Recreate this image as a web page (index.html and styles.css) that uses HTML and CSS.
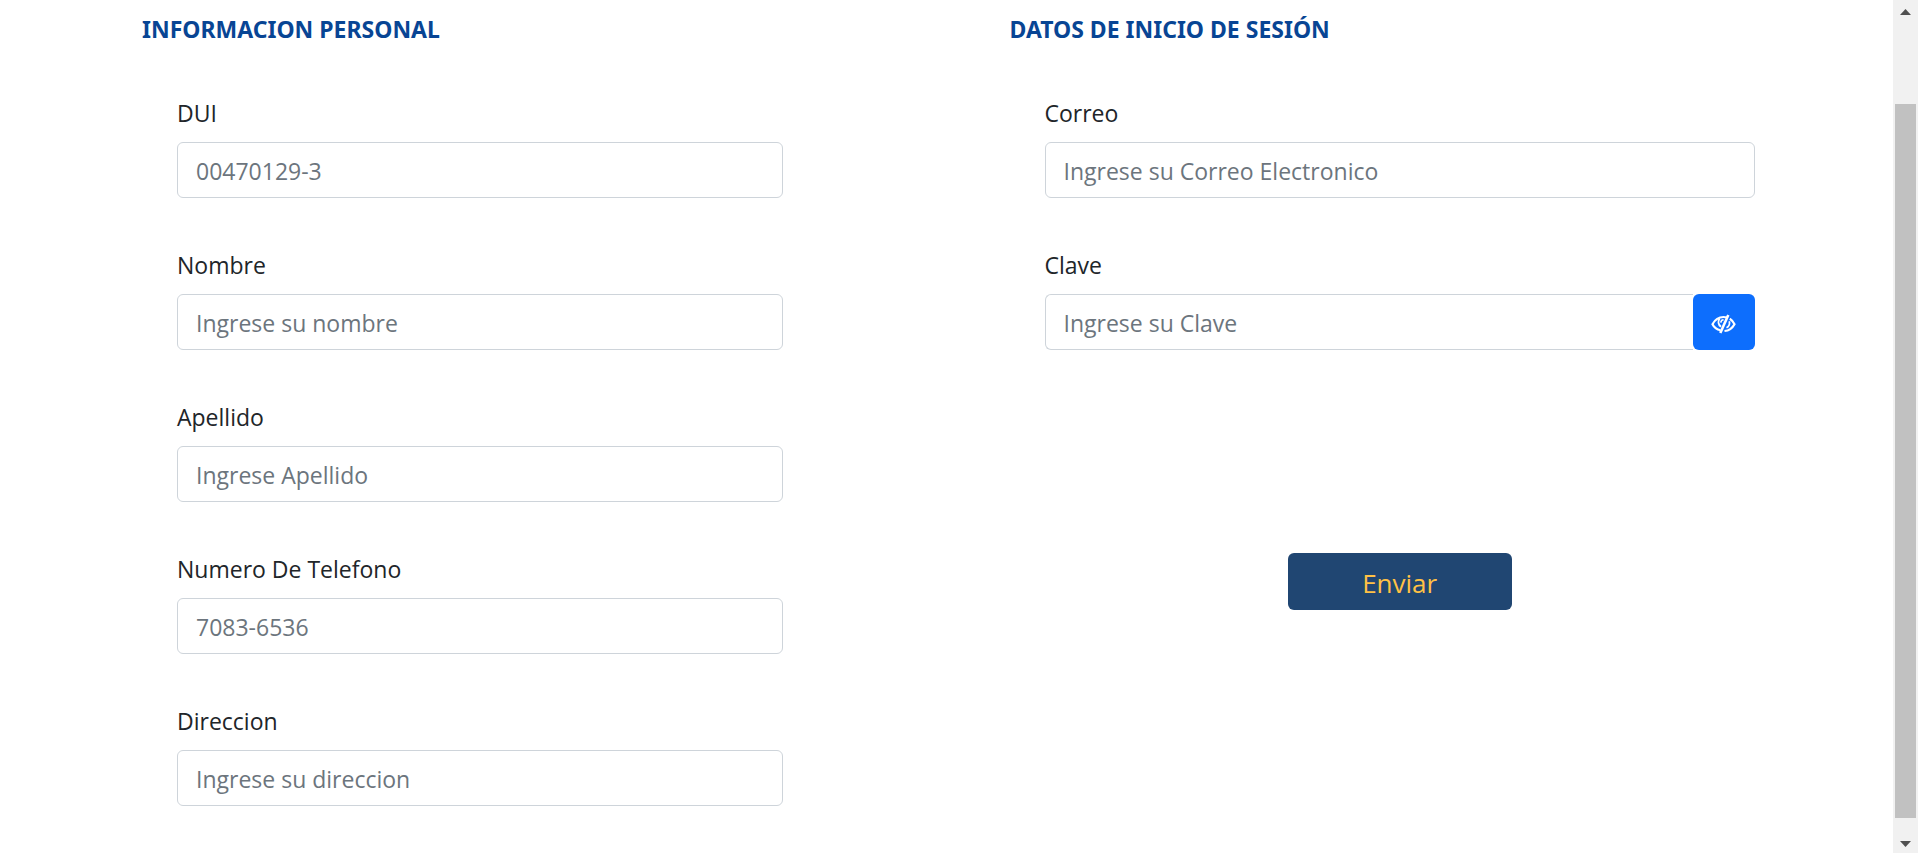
FILE: index.html
```html
<!DOCTYPE html>
<html lang="es">
<head>
<meta charset="utf-8">
<meta name="viewport" content="width=device-width, initial-scale=1">
<title>Registro</title>
<link rel="stylesheet" href="styles.css">
</head>
<body class="page">
<form class="form">
  <section class="column">
    <h2 class="heading">INFORMACION PERSONAL</h2>
    <div class="fields fields-personal">
      <div class="field"><label class="label" for="dui">DUI</label><input class="input" id="dui" type="text" placeholder="00470129-3"></div>
      <div class="field"><label class="label" for="nombre">Nombre</label><input class="input" id="nombre" type="text" placeholder="Ingrese su nombre"></div>
      <div class="field"><label class="label" for="apellido">Apellido</label><input class="input" id="apellido" type="text" placeholder="Ingrese Apellido"></div>
      <div class="field"><label class="label" for="telefono">Numero De Telefono</label><input class="input" id="telefono" type="tel" placeholder="7083-6536"></div>
      <div class="field"><label class="label" for="direccion">Direccion</label><input class="input" id="direccion" type="text" placeholder="Ingrese su direccion"></div>
    </div>
  </section>
  <section class="column">
    <h2 class="heading">DATOS DE INICIO DE SESIÓN</h2>
    <div class="fields fields-login">
      <div class="field"><label class="label" for="correo">Correo</label><input class="input" id="correo" type="email" placeholder="Ingrese su Correo Electronico"></div>
      <div class="field">
        <label class="label" for="clave">Clave</label>
        <div class="group">
          <input class="input input-joined" id="clave" type="password" placeholder="Ingrese su Clave">
          <button class="toggle" type="button" aria-label="Mostrar clave">
            <svg class="eye" viewBox="0 0 25 20" fill="none" stroke="currentColor" aria-hidden="true">
              <path d="M9.500 16.200C5.500 15.300 2.800 12.800 1.500 10.200C4 5.500 8 3 12.500 3C13.700 3 14.800 3.200 15.800 3.500" stroke-width="2.200"/>
              <path d="M18.800 4.700C20.800 5.900 22.300 7.800 23.500 10.200C21.500 13.900 18 16.600 13.500 17" stroke-width="2.200"/>
              <path d="M8.500 4.500C6.800 7 7.200 10.600 10 12.800" stroke-width="2"/>
              <path d="M12.600 5.800C10.800 6 9.900 7 9.800 8.600" stroke-width="1.600"/>
              <path d="M18.300 7.300C19 10 18 12.500 15.500 13.700" stroke-width="1.800"/>
              <path d="M17.300 1L9.300 19" stroke-width="2.600"/>
            </svg>
          </button>
        </div>
      </div>
      <button class="submit" type="submit">Enviar</button>
    </div>
  </section>
</form>
<div class="scrollbar" aria-hidden="true">
  <svg class="arrow" viewBox="0 0 25 25"><path d="M7 15L12.500 9L18 15Z"/></svg>
  <div class="track"><div class="thumb"></div></div>
  <svg class="arrow" viewBox="0 0 25 25"><path d="M7 13L12.500 19L18 13Z"/></svg>
</div>
</body>
</html>
```
FILE: styles.css
```css
* { box-sizing: border-box; }

.page {
  display: flex;
  height: 100vh;
  margin: 0;
  overflow: hidden;
  background: #fff;
  color: #212529;
  font-family: "Segoe UI", "Open Sans", sans-serif;
  font-size: 23px;
  line-height: 36px;
}

.form {
  flex: 1;
  display: grid;
  grid-template-columns: 1fr 1fr;
  align-items: start;
  padding: 11px 16px 0 142px;
}

.heading {
  margin: 0 0 48px;
  color: #084594;
  font-family: "Segoe UI", "Noto Sans", sans-serif;
  font-size: 23px;
  font-weight: 700;
  line-height: 36px;
}

.fields {
  display: flex;
  flex-direction: column;
  gap: 49px;
  margin-left: 35px;
}

.fields-personal { width: calc(70% - 1px); }
.fields-login { width: calc(82% - 1px); }

.field {
  display: flex;
  flex-direction: column;
  gap: 11px;
}

.input {
  width: 100%;
  height: 56px;
  padding: 2px 18px 0;
  border: 1px solid #ced4da;
  border-radius: 6px;
  background: #fff;
  color: #212529;
  font: inherit;
}

.input::placeholder {
  color: #6c757d;
  opacity: 1;
}

.group { display: flex; }

.input-joined {
  flex: 1;
  min-width: 0;
  border-right: 0;
  border-radius: 6px 0 0 6px;
}

.toggle {
  display: flex;
  align-items: center;
  justify-content: center;
  width: 62px;
  height: 56px;
  padding: 4px 0 0;
  border: 0;
  border-radius: 6px;
  background: #0d6efd;
  color: #fff;
}

.eye {
  width: 25px;
  height: 20px;
}

.submit {
  align-self: center;
  width: 224px;
  height: 57px;
  margin-top: 154px;
  padding: 3px 0 0;
  border: 0;
  border-radius: 6px;
  background: #204672;
  color: #ffc145;
  font: inherit;
  font-size: 26px;
}

.scrollbar {
  display: flex;
  flex-direction: column;
  width: 25px;
  background: #f1f1f1;
}

.arrow {
  width: 25px;
  height: 25px;
  fill: #505050;
}

.track {
  flex: 1;
  display: grid;
  grid-template-rows: 79fr 714fr 10fr;
  padding: 0 2px;
}

.thumb {
  grid-row: 2;
  background: #c1c1c1;
}
```
